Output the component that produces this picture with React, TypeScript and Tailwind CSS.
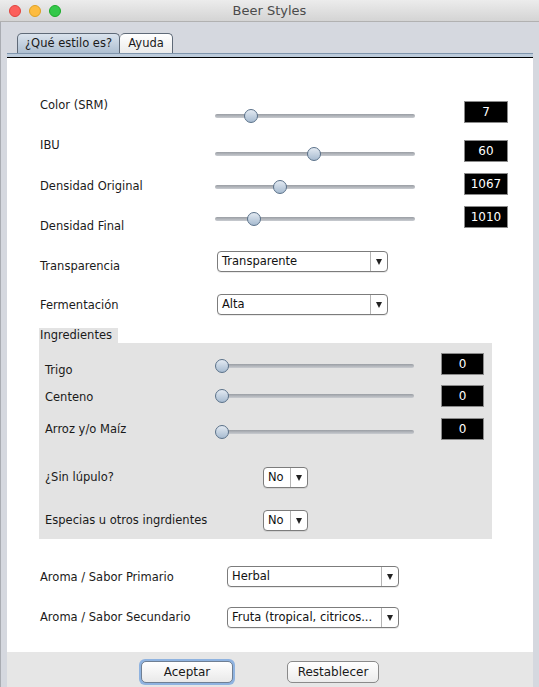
import React from "react";

const font = { fontFamily: '"DejaVu Sans", "Liberation Sans", sans-serif' };

function Slider({ pos, w = 200 }: { pos: number; w?: number }) {
  return (
    <div className="relative h-[16px]" style={{ width: w }}>
      <div className="absolute left-0 right-0 top-[6px] h-[4px] rounded-full bg-gradient-to-b from-[#9a9ea4] to-[#c9ccd1]" />
      <div
        className="absolute top-[1px] h-[14px] w-[14px] rounded-full border border-[#5a7189] bg-gradient-to-b from-[#e3eaf2] to-[#a7bbd0]"
        style={{ left: pos - 7 }}
      />
    </div>
  );
}

function ValBox({ v, w = 44 }: { v: string; w?: number }) {
  return (
    <div
      className="flex h-[22px] items-center justify-center border border-[#8a8a8a] bg-black text-[12px] text-white"
      style={{ width: w }}
    >
      {v}
    </div>
  );
}

function Combo({ text, w }: { text: string; w: number }) {
  return (
    <div
      className="flex h-[21px] items-stretch rounded-[4px] border border-[#7c7c7c] bg-white shadow-[0_1px_0_rgba(0,0,0,0.08)]"
      style={{ width: w }}
    >
      <div className="flex flex-1 items-center overflow-hidden whitespace-nowrap pl-[4px] text-[11.5px] text-[#111]">
        {text}
      </div>
      <div className="flex w-[17px] items-center justify-center border-l border-[#b4b4b4]">
        <div className="h-0 w-0 border-l-[3.5px] border-r-[3.5px] border-t-[6px] border-l-transparent border-r-transparent border-t-[#222]" />
      </div>
    </div>
  );
}

export default function App() {
  return (
    <div className="flex h-[687px] w-[539px] flex-col overflow-hidden bg-[#d5d8df] text-[11.5px] text-[#1a1a1a]" style={font}>
      {/* title bar */}
      <div className="relative flex h-[22px] shrink-0 items-center border-b border-[#b1b1b1] bg-gradient-to-b from-[#ececec] to-[#d4d4d4]">
        <div className="ml-[9px] flex gap-[8px]">
          <div className="h-[12px] w-[12px] rounded-full border border-[#e0443e] bg-[#fc605c]" />
          <div className="h-[12px] w-[12px] rounded-full border border-[#dea123] bg-[#fdbc40]" />
          <div className="h-[12px] w-[12px] rounded-full border border-[#1aab29] bg-[#34c84a]" />
        </div>
        <div className="absolute inset-0 flex items-center justify-center text-[13px] text-[#4b4b4b]" style={{ fontFamily: '"DejaVu Sans", sans-serif' }}>
          Beer Styles
        </div>
      </div>

      {/* body */}
      <div className="flex flex-1 flex-col border-l border-[#a9acb2] pl-[6px] pr-[6px]">
        {/* tabs */}
        <div className="mt-[11px] flex h-[20px] shrink-0 pl-[10px]">
          <div className="flex w-[103px] items-center justify-center rounded-t-[5px] border border-b-0 border-[#5f6a78] bg-gradient-to-b from-[#dae3ed] to-[#aebfd1] text-[11.5px]">
            ¿Qué estilo es?
          </div>
          <div className="flex w-[53px] items-center justify-center rounded-t-[5px] border border-b-0 border-l-0 border-[#5f6a78] bg-gradient-to-b from-[#ffffff] to-[#ebebeb] text-[11.5px]">
            Ayuda
          </div>
        </div>
        <div className="h-[1px] shrink-0 bg-[#7f95ad]" />
        <div className="h-[3px] shrink-0 bg-[#bccbdb]" />
        <div className="h-[1px] shrink-0 bg-black" />

        {/* content */}
        <div className="flex h-[594px] shrink-0 flex-col bg-white pt-[39px]">
          {/* slider rows */}
          <div className="flex h-[40px] shrink-0 pl-[33px]">
            <div className="w-[175px] leading-[16px]">Color (SRM)</div>
            <div className="mt-[11px]"><Slider pos={36} /></div>
            <div className="ml-[49px] mt-[4px]"><ValBox v="7" /></div>
          </div>
          <div className="flex h-[36px] shrink-0 pl-[33px]">
            <div className="w-[175px] leading-[16px]">IBU</div>
            <div className="mt-[9px]"><Slider pos={99} /></div>
            <div className="ml-[49px] mt-[3px]"><ValBox v="60" /></div>
          </div>
          <div className="flex h-[33px] shrink-0 pl-[33px]">
            <div className="mt-[5px] w-[175px] leading-[16px]">Densidad Original</div>
            <div className="mt-[6px]"><Slider pos={65} /></div>
            <div className="ml-[49px]"><ValBox v="1067" /></div>
          </div>
          <div className="flex h-[45px] shrink-0 pl-[33px]">
            <div className="mt-[12px] w-[175px] leading-[16px]">Densidad Final</div>
            <div className="mt-[5px]"><Slider pos={39} /></div>
            <div className="ml-[49px]"><ValBox v="1010" /></div>
          </div>

          {/* combos */}
          <div className="flex h-[43px] shrink-0 pl-[33px]">
            <div className="mt-[7px] w-[177px] leading-[16px]">Transparencia</div>
            <Combo text="Transparente" w={171} />
          </div>
          <div className="flex h-[34px] shrink-0 pl-[33px]">
            <div className="mt-[3px] w-[177px] leading-[16px]">Fermentación</div>
            <Combo text="Alta" w={171} />
          </div>

          {/* ingredientes */}
          <div className="ml-[32px] flex h-[15px] w-[79px] shrink-0 items-end bg-[#e3e3e3] pl-[1px] leading-[15px]">
            Ingredientes
          </div>
          <div className="ml-[32px] flex h-[196px] w-[453px] shrink-0 flex-col bg-[#e3e3e3] pl-[6px] pt-[10px]">
            <div className="flex h-[32px] shrink-0">
              <div className="mt-[9px] w-[171px] leading-[16px]">Trigo</div>
              <div className="mt-[5px]"><Slider pos={6} w={198} /></div>
              <div className="ml-[27px]"><ValBox v="0" w={43} /></div>
            </div>
            <div className="flex h-[33px] shrink-0">
              <div className="mt-[4px] w-[171px] leading-[16px]">Centeno</div>
              <div className="mt-[3px]"><Slider pos={6} w={198} /></div>
              <div className="ml-[27px]"><ValBox v="0" w={43} /></div>
            </div>
            <div className="flex h-[49px] shrink-0">
              <div className="mt-[3px] w-[171px] leading-[16px]">Arroz y/o Maíz</div>
              <div className="mt-[6px]"><Slider pos={6} w={198} /></div>
              <div className="ml-[27px]"><ValBox v="0" w={43} /></div>
            </div>
            <div className="flex h-[43px] shrink-0">
              <div className="mt-[2px] w-[218px] leading-[16px]">¿Sin lúpulo?</div>
              <Combo text="No" w={45} />
            </div>
            <div className="flex h-[22px] shrink-0">
              <div className="mt-[2px] w-[218px] leading-[16px]">Especias u otros ingrdientes</div>
              <Combo text="No" w={45} />
            </div>
          </div>

          {/* aromas */}
          <div className="mt-[27px] flex h-[41px] shrink-0 pl-[33px]">
            <div className="mt-[3px] w-[187px] leading-[16px]">Aroma / Sabor Primario</div>
            <Combo text="Herbal" w={172} />
          </div>
          <div className="flex h-[22px] shrink-0 pl-[33px]">
            <div className="mt-[2px] w-[187px] leading-[16px]">Aroma / Sabor Secundario</div>
            <Combo text="Fruta (tropical, citricos..." w={172} />
          </div>
        </div>

        {/* button bar */}
        <div className="flex flex-1 items-start bg-[#e6e6e6] pt-[7px]">
          <div className="ml-[132px] rounded-[6px] bg-[#8fb3e0] p-[2px]">
            <div className="flex h-[22px] w-[92px] items-center justify-center rounded-[5px] border border-[#6f7f93] bg-gradient-to-b from-[#ffffff] to-[#e9e9e9] text-[12px]">
              Aceptar
            </div>
          </div>
          <div className="ml-[52px] mt-[2px] flex h-[22px] w-[92px] items-center justify-center rounded-[5px] border border-[#8a8a8a] bg-gradient-to-b from-[#ffffff] to-[#ececec] text-[12px]">
            Restablecer
          </div>
        </div>
      </div>
    </div>
  );
}
